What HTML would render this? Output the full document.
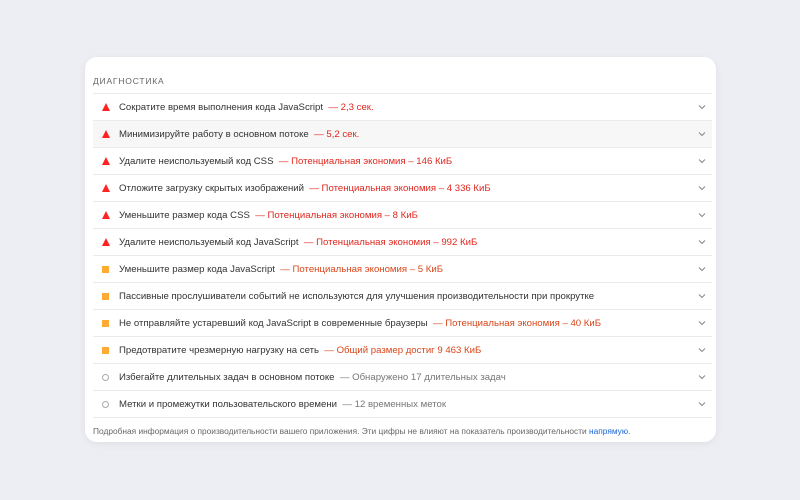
<!DOCTYPE html>
<html><head><meta charset="utf-8"><style>
body{margin:0;width:800px;height:500px;background:#eceef3;font-family:"Liberation Sans",sans-serif;position:relative;overflow:hidden}
.card{position:absolute;left:85px;top:57px;width:631px;height:385px;background:#fff;border-radius:12px;box-shadow:0 2px 8px rgba(0,0,0,.06)}
.h{position:absolute;left:8px;top:19px;font-size:8.5px;letter-spacing:.8px;color:#666}
.rows{position:absolute;left:8px;top:36px;width:619px;border-top:1px solid #ebebeb}
.r{height:26px;border-bottom:1px solid #ebebeb;position:relative;font-size:9.6px;line-height:27px;color:#333}
.r.alt{background:#f7f7f7}
.r .t{position:absolute;left:26px;top:0;white-space:nowrap}
.red{color:#e0261e}.or{color:#d9461a}.gr{color:#777}
.ic{position:absolute;left:9px;top:9px}
.tri{width:0;height:0;border-left:4px solid transparent;border-right:4px solid transparent;border-bottom:8px solid #f22;}
.sq{width:7px;height:7px;background:#fa3;top:10px;left:9px}
.ci{width:5px;height:5px;border:1px solid #aaa;border-radius:50%;top:10px}
.ch{position:absolute;right:6px;top:10px}
.f{position:absolute;left:8px;top:369px;font-size:8.35px;color:#666}
.f a{color:#1a66d6;text-decoration:none}
</style></head><body>
<div class="card">
<div class="h">ДИАГНОСТИКА</div>
<div class="rows">
<div class="r"><div class="ic tri"></div><div class="t">Сократите время выполнения кода JavaScript &nbsp;<span class="red">— 2,3 сек.</span></div><svg class="ch" width="8" height="6" viewBox="0 0 8 6"><path d="M1 1.5l3 3 3-3" fill="none" stroke="#888" stroke-width="1"/></svg></div>
<div class="r alt"><div class="ic tri"></div><div class="t">Минимизируйте работу в основном потоке &nbsp;<span class="red">— 5,2 сек.</span></div><svg class="ch" width="8" height="6" viewBox="0 0 8 6"><path d="M1 1.5l3 3 3-3" fill="none" stroke="#888" stroke-width="1"/></svg></div>
<div class="r"><div class="ic tri"></div><div class="t">Удалите неиспользуемый код CSS &nbsp;<span class="red">— Потенциальная экономия – 146 КиБ</span></div><svg class="ch" width="8" height="6" viewBox="0 0 8 6"><path d="M1 1.5l3 3 3-3" fill="none" stroke="#888" stroke-width="1"/></svg></div>
<div class="r"><div class="ic tri"></div><div class="t">Отложите загрузку скрытых изображений &nbsp;<span class="red">— Потенциальная экономия – 4 336 КиБ</span></div><svg class="ch" width="8" height="6" viewBox="0 0 8 6"><path d="M1 1.5l3 3 3-3" fill="none" stroke="#888" stroke-width="1"/></svg></div>
<div class="r"><div class="ic tri"></div><div class="t">Уменьшите размер кода CSS &nbsp;<span class="red">— Потенциальная экономия – 8 КиБ</span></div><svg class="ch" width="8" height="6" viewBox="0 0 8 6"><path d="M1 1.5l3 3 3-3" fill="none" stroke="#888" stroke-width="1"/></svg></div>
<div class="r"><div class="ic tri"></div><div class="t">Удалите неиспользуемый код JavaScript &nbsp;<span class="red">— Потенциальная экономия – 992 КиБ</span></div><svg class="ch" width="8" height="6" viewBox="0 0 8 6"><path d="M1 1.5l3 3 3-3" fill="none" stroke="#888" stroke-width="1"/></svg></div>
<div class="r"><div class="ic sq"></div><div class="t">Уменьшите размер кода JavaScript &nbsp;<span class="or">— Потенциальная экономия – 5 КиБ</span></div><svg class="ch" width="8" height="6" viewBox="0 0 8 6"><path d="M1 1.5l3 3 3-3" fill="none" stroke="#888" stroke-width="1"/></svg></div>
<div class="r"><div class="ic sq"></div><div class="t">Пассивные прослушиватели событий не используются для улучшения производительности при прокрутке</div><svg class="ch" width="8" height="6" viewBox="0 0 8 6"><path d="M1 1.5l3 3 3-3" fill="none" stroke="#888" stroke-width="1"/></svg></div>
<div class="r"><div class="ic sq"></div><div class="t">Не отправляйте устаревший код JavaScript в современные браузеры &nbsp;<span class="or">— Потенциальная экономия – 40 КиБ</span></div><svg class="ch" width="8" height="6" viewBox="0 0 8 6"><path d="M1 1.5l3 3 3-3" fill="none" stroke="#888" stroke-width="1"/></svg></div>
<div class="r"><div class="ic sq"></div><div class="t">Предотвратите чрезмерную нагрузку на сеть &nbsp;<span class="or">— Общий размер достиг 9 463 КиБ</span></div><svg class="ch" width="8" height="6" viewBox="0 0 8 6"><path d="M1 1.5l3 3 3-3" fill="none" stroke="#888" stroke-width="1"/></svg></div>
<div class="r"><div class="ic ci"></div><div class="t">Избегайте длительных задач в основном потоке &nbsp;<span class="gr">— Обнаружено 17 длительных задач</span></div><svg class="ch" width="8" height="6" viewBox="0 0 8 6"><path d="M1 1.5l3 3 3-3" fill="none" stroke="#888" stroke-width="1"/></svg></div>
<div class="r"><div class="ic ci"></div><div class="t">Метки и промежутки пользовательского времени &nbsp;<span class="gr">— 12 временных меток</span></div><svg class="ch" width="8" height="6" viewBox="0 0 8 6"><path d="M1 1.5l3 3 3-3" fill="none" stroke="#888" stroke-width="1"/></svg></div>
</div>
<div class="f">Подробная информация о производительности вашего приложения. Эти цифры не влияют на показатель производительности <a>напрямую</a>.</div>
</div>
</body></html>
